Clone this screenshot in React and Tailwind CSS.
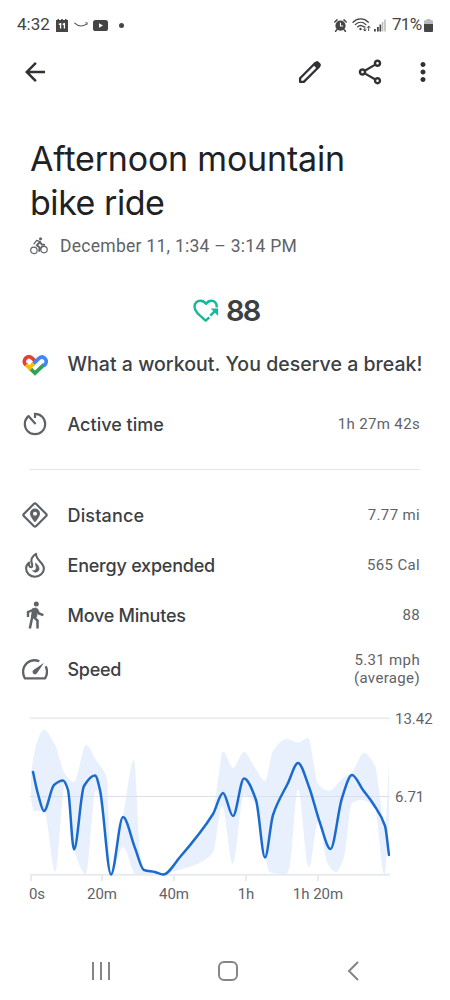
import React from 'react';
import { MdArrowBack, MdMoreVert, MdOutlineShare } from 'react-icons/md';

// [x along the time axis, y of the speed]
const SPEED = [
    [33, 72], [38, 94], [44, 111], [54, 85], [63, 80.5], [68, 90], [74, 149.5], [84, 86], [95, 75.5], [100, 90],
    [111, 174.5], [123, 117], [135, 148], [144, 170], [155, 172], [163, 174.5], [180, 157], [213, 114], [223, 93],
    [233, 116], [244, 78.5], [256, 100], [265, 157.5], [273, 115], [288, 83], [298, 63], [309, 87], [320, 123],
    [330.5, 149], [342, 98], [352, 75], [363, 90], [374, 105], [385, 126], [389, 155],
];

const FASTEST = [
    [31, 72], [37, 42], [44, 30], [55, 45], [65, 74], [74, 82], [86, 45], [96, 60], [107, 79], [111, 174],
    [123, 117], [134, 60], [140, 152], [144, 170], [155, 172], [163, 174], [180, 157], [213, 114], [218, 80],
    [223, 51.5], [233, 68], [244, 52], [255, 68], [265, 81], [273, 51], [287, 39], [298, 42.5], [308, 38],
    [318, 84], [329, 91], [343, 78], [352, 72], [364, 53], [375, 66], [381, 106], [385, 130], [389, 63],
];

const SLOWEST = [
    [389, 120], [384.5, 174], [375, 109], [362, 100], [352, 103], [344, 157], [336, 172], [328, 164], [318, 122],
    [309, 167], [298, 89], [290, 165], [286, 174.5], [270, 172], [263, 145], [255, 103], [244, 95], [233, 164],
    [222, 106], [213, 152], [195, 165], [175, 171], [163, 174.5], [136, 174], [123, 147], [111, 174.5],
    [104, 125], [96, 90], [86, 174], [74, 149.5], [65, 84], [55.5, 172], [44, 111], [34, 111], [31, 100],
];

// Monotone cubic segments, so the curve never overshoots a sample
const smooth = (pts, first = 'M') => {
    const slope = (i) => (pts[i + 1][1] - pts[i][1]) / (pts[i + 1][0] - pts[i][0]);
    const tangents = pts.map((_, i) => {
        if (i === 0) return slope(0);
        if (i === pts.length - 1) return slope(i - 1);
        const a = slope(i - 1);
        const b = slope(i);
        return a * b <= 0 ? 0 : (2 * a * b) / (a + b);
    });
    let d = `${first}${pts[0][0]} ${pts[0][1]}`;
    for (let i = 0; i < pts.length - 1; i++) {
        const [x0, y0] = pts[i];
        const [x1, y1] = pts[i + 1];
        const h = (x1 - x0) / 3;
        d += `C${x0 + h} ${y0 + h * tangents[i]} ${x1 - h} ${y1 - h * tangents[i + 1]} ${x1} ${y1}`;
    }
    return d;
};

const CalendarIcon = () => (
    <svg width="12" height="13" viewBox="0 0 12 13">
        <path d="M0 1h1.5V0h1.5v1h2.2V0h1.6v1H9V0h1.5v1H12v12H0z" fill="#454545" />
        <path d="M2.8 5.3 4.6 4.6v5M6.6 5.3 8.4 4.6v5" fill="none" stroke="#fff" strokeWidth="1.3" />
    </svg>
);

const SmileIcon = () => (
    <svg width="14" height="6" viewBox="0 0 14 6" fill="none" stroke="#555" strokeLinecap="round">
        <path d="M.7 1.2c3.4 3.2 8 3.3 11.8.9" strokeWidth="1.1" />
        <path d="M11.5.8h2l-.7 2" strokeWidth=".8" />
    </svg>
);

const VideoIcon = () => (
    <svg width="15" height="11" viewBox="0 0 15 11">
        <rect width="15" height="11" rx="2.6" fill="#454545" />
        <path d="M6 3.2v4.6l4-2.3z" fill="#fff" />
    </svg>
);

const AlarmIcon = () => (
    <svg width="13" height="13" viewBox="0 0 13 13" fill="none" stroke="#454545" strokeLinecap="round">
        <circle cx="6.5" cy="6.7" r="5.1" fill="#454545" stroke="none" />
        <path d="M.8 3 3 .9M12.2 3 10 .9M2.8 10.8l-1.2 1.5M10.2 10.8l1.2 1.5" strokeWidth="1.5" />
        <path d="M6.5 4v3h2.2" stroke="#fff" strokeWidth="1.1" />
    </svg>
);

const WifiIcon = () => (
    <svg width="19" height="14" viewBox="0 0 19 14" fill="none" stroke="#454545" strokeLinecap="round">
        <path d="M1 4.2C5.4-.2 12-.2 16.3 4.2M3.3 6.600c3.200-3 7.500-3 10.600 0M5.600 8.800c2-1.700 4.200-1.700 6 0" strokeWidth="1.3" />
        <circle cx="8.5" cy="11" r="1.2" fill="#454545" stroke="none" />
        <path d="M12.800 8.500v4.300M11.500 11.600l1.300 1.400 1.300-1.400M16.700 12.600V8.300M15.400 9.500l1.300-1.400L18 9.500" strokeWidth="1" />
    </svg>
);

const SignalIcon = () => (
    <svg width="12" height="13" viewBox="0 0 12 13">
        <path d="M0 10h1.800v2.500H0zM3 8h1.800v4.500H3zM5.500 5.500h1.700v7H5.500z" fill="#454545" />
        <path d="M7.800 3h1.600v9.500H7.800zM10.200.5h1.600v12h-1.600z" fill="#bdbdbd" />
    </svg>
);

const BatteryIcon = () => (
    <svg width="9" height="13" viewBox="0 0 9 13">
        <path d="M2.500 1.300V0h4v1.300H8q1 0 1 1V5H0V2.300q0-1 1-1z" fill="#b9b9b9" />
        <path d="M0 5h9v7q0 1-1 1H1q-1 0-1-1z" fill="#454545" />
    </svg>
);

const PencilIcon = () => (
    <svg width="24" height="24" viewBox="0 0 24 24" fill="none" stroke="#303135" strokeLinejoin="round">
        <path d="M2.100 18.200 17 3.300l3.700 3.700L5.800 21.900H2.100z" strokeWidth="2.300" />
        <path d="m14.800 4.500 3-3q1.300-1 2.700.2l1.800 1.800q1.200 1.400.2 2.700l-3 3z" fill="#303135" stroke="none" />
    </svg>
);

const BikeIcon = () => (
    <svg width="18" height="18" viewBox="0 0 18 18" fill="none" stroke="#5f6368" strokeLinecap="round" strokeLinejoin="round">
        <circle cx="3.900" cy="13.400" r="3.200" strokeWidth="1.200" />
        <circle cx="14" cy="12.600" r="3.200" strokeWidth="1.200" />
        <circle cx="10.500" cy="1.900" r="1.300" fill="#5f6368" strokeWidth=".4" />
        <path d="M10 5 6.700 8.300l3 2.300-.6 3.200M10 5l1.700 2.500 2.500.3" strokeWidth="1.900" />
        <path d="M4 6.800 6.700 3.300 9.300 4.300M9.300 13.800l2.300-4" strokeWidth="1.300" />
    </svg>
);

const HeartPointsIcon = () => (
    <svg width="26" height="24" viewBox="0 0 26 24" fill="none" stroke="#17b898" strokeWidth="2.400">
        <path
            d="M23.700 8.500V7.500C23.700 4 21.500 1.800 18.500 1.800c-2.400 0-4 1-5.500 3-1.500-2-3.100-3-5.500-3C4 1.800 1.500 4.300 1.500 7.700c0 5 4.700 8.400 11.200 13.900l3.600-3.300"
            strokeLinejoin="round"
        />
        <path d="m17.300 16.700 5.500-5.400" strokeWidth="2.500" />
        <path d="M17.700 9.500h7.400v7.400z" fill="#17b898" stroke="none" />
    </svg>
);

const FitIcon = () => (
    <svg width="26" height="22" viewBox="0 0 26 22" fill="none" strokeWidth="3.700">
        <path d="m21.900 10.600-8.900 8.500-4.600-4.400" stroke="#34a053" />
        <path d="m13.600 7.700-2.700-2.900C8.900 2.700 6.300 2 4.200 3.700 1.800 5.600 1.700 8.600 3.500 10.400l.9.900" stroke="#e04237" />
        <path d="m10.300 11 5.800-5.900c2-2 4.500-2.800 6.500-1 2.100 1.900 2.100 4.500.5 6.300l-1.700 1.700" stroke="#4285f4" />
        <path d="m4 10.700 4.900 4.700M7.500 13.800l4.300-4.300" stroke="#fbbc04" />
    </svg>
);

const TimerIcon = () => (
    <svg width="24" height="24" viewBox="0 0 24 24" fill="none" stroke="#5f6368" strokeWidth="2.200">
        <path d="M12 6V1.800C17.700 1.800 22.200 6.300 22.200 12S17.700 22.200 12 22.200 1.800 17.700 1.800 12c0-3.400 1.500-6.100 4-8" />
        <path d="m5 3.500 7.600 8.500" />
    </svg>
);

const DistanceIcon = () => (
    <svg width="26" height="26" viewBox="0 0 26 26" fill="#5f6368">
        <path
            d="M12 1.800 1.800 12q-1 1 0 2L12 24.200q1 1 2 0L24.200 14q1-1 0-2L14 1.800q-1-1-2 0z"
            fill="none"
            stroke="#5f6368"
            strokeWidth="2.200"
        />
        <path
            fillRule="evenodd"
            d="M13 6.500a5 5 0 0 0-5 5c0 3.600 5 8.800 5 8.800s5-5.200 5-8.800a5 5 0 0 0-5-5zm0 3.200a2 2 0 1 1 0 4 2 2 0 0 1 0-4z"
        />
    </svg>
);

const FlameIcon = () => (
    <svg width="20" height="26" viewBox="0 0 20 26" fill="none" stroke="#5f6368" strokeWidth="2.100" strokeLinejoin="round">
        <path d="M11 1.800C6.800 4.400 5.600 8 6.900 11.600c.7 2 .4 3.600-1 3.600-1.600 0-2-2-1.800-4.600C2 12.300 1.100 14.300 1.100 16.500c0 4.700 4 8.200 8.900 8.200s8.900-3.600 8.900-8.300c0-6-7.800-7.600-7.900-14.600z" />
        <path d="M10.600 11c-.6 2.600 1 3.300.6 5.200-.3 1.800-1.800 2.600-3.800 2.400 1.800 2.600 6.500 1.800 6.700-1.700.1-2.500-1.700-4.300-3.500-5.900z" fill="#5f6368" strokeWidth=".6" />
    </svg>
);

const WalkIcon = () => (
    <svg width="18" height="28" viewBox="0 0 18 28" fill="none" stroke="#5f6368">
        <circle cx="10.300" cy="3" r="2.500" fill="#5f6368" stroke="none" />
        <path d="M8.800 8.300 2 11v5" strokeWidth="2.400" />
        <path d="M6.300 7.800 10 6.900l2 1.500-1.500 7.800-5-.2z" fill="#5f6368" strokeWidth=".8" />
        <path d="m10.800 8.700 2.100 3.700 4.500 1.700M6.700 14 3.800 27.500M7.500 15.800l4 3.700v8" strokeWidth="2.500" />
    </svg>
);

const GaugeIcon = () => (
    <svg width="26" height="21" viewBox="0 0 26 21">
        <path
            d="M17.300 2.300C11.500-.2 5 2 2.300 7.600c-1.700 3.500-1.500 7.800.5 11.700h20.400c2.300-4.200 2.300-8.200.5-12"
            fill="none"
            stroke="#5f6368"
            strokeWidth="2.300"
            strokeLinejoin="round"
        />
        <path d="M22 3.800 15 14.300c-.8 1.300-2.500 1.500-3.600.5-1.200-1-1.100-2.700.1-3.700z" fill="#5f6368" />
    </svg>
);

const METRICS = [
    { label: 'Distance', value: '7.77 mi', icon: <DistanceIcon />, row: 'h-[50px]', track: 'tracking-[0.15px]' },
    { label: 'Energy expended', value: '565 Cal', icon: <FlameIcon />, row: 'h-[50px]', track: 'tracking-[-0.22px]' },
    { label: 'Move Minutes', value: '88', icon: <WalkIcon />, row: 'h-[50px]', track: 'tracking-[-0.25px]' },
    { label: 'Speed', value: <>5.31 mph<br />(average)</>, icon: <GaugeIcon />, row: 'h-[58px]', track: 'tracking-[-0.3px]' },
];

const MetricRow = ({ label, value, icon, row, track }) => (
    <div className={`flex items-center pl-[20px] pr-[30px] ${row}`}>
        <span className="flex w-[30px] justify-center text-[#5f6368]">{icon}</span>
        <span className={`ml-[17.5px] flex-1 font-['Inter',sans-serif] text-[18px] font-medium text-[#3c4043] ${track}`}>{label}</span>
        <span className="pt-px text-right text-[15px] leading-[17.5px] tracking-[0.35px] text-[#5f6368]">{value}</span>
    </div>
);

const TICKS = [
    { x: 31, at: 37, label: '0s' },
    { x: 102, at: 102, label: '20m' },
    { x: 174, at: 174, label: '40m' },
    { x: 246, at: 246, label: '1h' },
    { x: 318, at: 318, label: '1h 20m' },
];

const SpeedChart = () => (
    <svg className="block" width="450" height="210" viewBox="0 0 450 210">
        <path d={`${smooth(FASTEST)}${smooth(SLOWEST, 'L')}Z`} fill="#e8f0fd" />
        <path d="M30 18.300h360" stroke="#e8eaed" strokeWidth="1.500" />
        <path d="M30 96.500h360" stroke="#dadfeb" strokeWidth="1.200" />
        <path d="M30 174.800h360" stroke="#e8eaed" strokeWidth="2" />
        {TICKS.map(({ x }) => <path key={x} d={`M${x} 175v6`} stroke="#e8eaed" strokeWidth="2" />)}
        <path d={smooth(SPEED)} fill="none" stroke="#1b6bce" strokeWidth="2.500" strokeLinecap="round" strokeLinejoin="round" />
        <g className="font-['Roboto',sans-serif] text-[15px]" fill="#5f6368">
            {TICKS.map(({ at, label }) => (
                <text key={label} x={at} y="199" textAnchor="middle">{label}</text>
            ))}
            <text x="395" y="23.500">13.42</text>
            <text x="395" y="101.500">6.71</text>
        </g>
    </svg>
);

const App = () => (
    <div className="flex h-[1000px] w-[450px] flex-col overflow-hidden bg-white font-['Roboto',sans-serif]">
        <div className="flex h-[50px] items-center pl-[17px] pr-[17px] text-[#454545]">
            <span className="w-[39px] text-[17px]">4:32</span>
            <CalendarIcon />
            <span className="ml-[6px]"><SmileIcon /></span>
            <span className="ml-[5px]"><VideoIcon /></span>
            <span className="ml-[11px] h-[5px] w-[5px] rounded-full bg-[#454545]" />
            <div className="ml-auto flex items-center">
                <AlarmIcon />
                <span className="ml-[5px]"><WifiIcon /></span>
                <span className="ml-[3px]"><SignalIcon /></span>
                <span className="ml-[6px] w-[32px] whitespace-nowrap text-[17px] tracking-[-0.7px]">71%</span>
                <BatteryIcon />
            </div>
        </div>

        <div className="flex h-[44px] items-center pl-[20px] pr-[12px] text-[#303135]">
            <MdArrowBack size={30} />
            <span className="ml-auto"><PencilIcon /></span>
            <MdOutlineShare className="ml-[33px]" size={30} />
            <MdMoreVert className="ml-[23px]" size={30} />
        </div>

        <div className="h-[168px] pl-[30px] pt-[43px]">
            <h1 className="font-['Inter',sans-serif] text-[34px] leading-[44px] tracking-[-0.2px] text-[#202124]">
                Afternoon mountain<br /><span className="tracking-[-0.45px]">bike ride</span>
            </h1>
            <div className="mt-[9px] flex items-center text-[#5f6368]">
                <BikeIcon />
                <span className="ml-[12px] text-[17.5px] leading-[24px] tracking-[0.27px]">December 11, 1:34 – 3:14 PM</span>
            </div>
        </div>

        <div className="mt-[28px] flex h-[42px] items-center pl-[193px] text-[#3c4043]">
            <HeartPointsIcon />
            <span className="ml-[7px] font-['Inter',sans-serif] text-[29px] font-semibold tracking-[-1.9px]">88</span>
        </div>

        <div className="flex h-[64px] items-center pl-[22px] pt-[2px]">
            <FitIcon />
            <span className="ml-[19.5px] whitespace-nowrap font-['Inter',sans-serif] text-[19.5px] font-medium tracking-[0.03px] text-[#3c4043]">
                What a workout. You deserve a break!
            </span>
        </div>
        <MetricRow label="Active time" value="1h 27m 42s" icon={<TimerIcon />} row="h-[56px]" track="tracking-[0px]" />
        <div className="ml-[30px] mr-[30px] mt-[17px] h-px bg-[#e3e5e8]" />

        <div className="mt-[20px]">
            {METRICS.map(metric => <MetricRow key={metric.label} {...metric} />)}
        </div>

        <div className="mt-[2px]">
            <SpeedChart />
        </div>

        <div className="mt-auto flex h-[58px] items-center justify-between pl-[91px] pr-[91px]">
            <svg width="20" height="20" viewBox="0 0 20 20" fill="none" stroke="#858585" strokeWidth="2">
                <path d="M2 1v18M10 1v18M18 1v18" />
            </svg>
            <svg className="mr-[3px]" width="20" height="20" viewBox="0 0 20 20" fill="none" stroke="#858585" strokeWidth="2">
                <rect x="1" y="1" width="18" height="18" rx="5" />
            </svg>
            <svg width="12" height="20" viewBox="0 0 12 20" fill="none" stroke="#858585" strokeWidth="2">
                <path d="M11 1 2 10l9 9" />
            </svg>
        </div>
    </div>
);

export default App;
